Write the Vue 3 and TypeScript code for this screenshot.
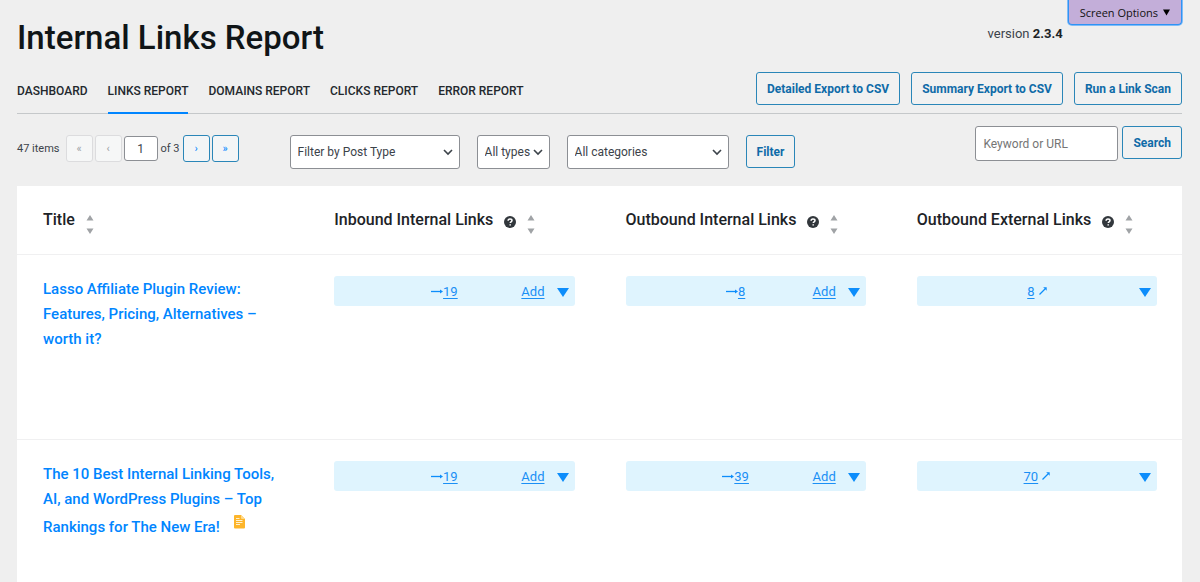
<script setup lang="ts">
import { ref } from 'vue'

interface Column {
  label: string
  help: boolean
}

interface Counter {
  count: number
  kind: 'internal' | 'external'
}

interface Post {
  title: string
  note: boolean
  counters: Counter[]
}

const tabs: string[] = ['Dashboard', 'Links Report', 'Domains Report', 'Clicks Report', 'Error Report']
const activeTab = ref('Links Report')

const actions: string[] = ['Detailed Export to CSV', 'Summary Export to CSV', 'Run a Link Scan']

const filters = [
  { id: 'post-type', name: 'Post type', option: 'Filter by Post Type', size: 'wide' },
  { id: 'link-type', name: 'Link type', option: 'All types', size: 'narrow' },
  { id: 'category', name: 'Category', option: 'All categories', size: 'medium' },
]

const columns: Column[] = [
  { label: 'Title', help: false },
  { label: 'Inbound Internal Links', help: true },
  { label: 'Outbound Internal Links', help: true },
  { label: 'Outbound External Links', help: true },
]

const posts: Post[] = [
  {
    title: 'Lasso Affiliate Plugin Review: Features, Pricing, Alternatives – worth it?',
    note: false,
    counters: [
      { count: 19, kind: 'internal' },
      { count: 8, kind: 'internal' },
      { count: 8, kind: 'external' },
    ],
  },
  {
    title: 'The 10 Best Internal Linking Tools, AI, and WordPress Plugins – Top Rankings for The New Era!',
    note: true,
    counters: [
      { count: 19, kind: 'internal' },
      { count: 39, kind: 'internal' },
      { count: 70, kind: 'external' },
    ],
  },
]

const page = ref('1')
const keyword = ref('')
</script>

<template>
  <main class="report">
    <header class="top">
      <h1>Internal Links Report</h1>
      <div class="top-side">
        <p class="version">version <strong>2.3.4</strong></p>
        <button type="button" class="screen-options">
          Screen Options
          <svg width="7" height="7" viewBox="0 0 8 7" aria-hidden="true"><path d="M0 0h8L4 7z" /></svg>
        </button>
      </div>
    </header>

    <div class="nav-row">
      <nav class="tabs">
        <a
          v-for="tab in tabs"
          :key="tab"
          href="#"
          :class="{ active: tab === activeTab }"
          @click.prevent="activeTab = tab"
        >{{ tab }}</a>
      </nav>
      <div class="actions">
        <button v-for="action in actions" :key="action" type="button" class="btn">{{ action }}</button>
      </div>
    </div>

    <div class="toolbar">
      <div class="pager">
        <span class="total">47 items</span>
        <button type="button" class="page-btn" disabled aria-label="First page">«</button>
        <button type="button" class="page-btn" disabled aria-label="Previous page">‹</button>
        <input v-model="page" type="text" class="page-input" aria-label="Current page" />
        <span class="of">of 3</span>
        <button type="button" class="page-btn" aria-label="Next page">›</button>
        <button type="button" class="page-btn" aria-label="Last page">»</button>
      </div>

      <div class="filters">
        <div v-for="f in filters" :key="f.id" class="select" :class="f.size">
          <select :id="f.id" :aria-label="f.name">
            <option>{{ f.option }}</option>
          </select>
          <svg width="10" height="7" viewBox="0 0 10 7" aria-hidden="true">
            <path d="M1 1l4 4 4-4" />
          </svg>
        </div>
        <button type="button" class="btn">Filter</button>
      </div>

      <form class="search" @submit.prevent>
        <input v-model="keyword" type="text" placeholder="Keyword or URL" aria-label="Keyword or URL" />
        <button type="submit" class="btn">Search</button>
      </form>
    </div>

    <div class="panel">
      <table>
        <thead>
          <tr>
            <th v-for="col in columns" :key="col.label" scope="col">
              <span class="head">
                <span>{{ col.label }}</span>
                <svg v-if="col.help" class="help" width="12" height="12" viewBox="0 0 12 12" aria-hidden="true">
                  <circle cx="6" cy="6" r="6" />
                  <path d="M4.1 4.7C4.1 3.4 5 2.9 6 2.9s2 .6 2 1.6c0 1.300-1.700 1.300-1.700 2.500" />
                  <path d="M6.200 8.200v1.400" />
                </svg>
                <svg class="sort" width="8" height="19" viewBox="0 0 8 19" aria-hidden="true">
                  <path d="M4 0l3.500 5.500h-7zM4 19l3.500-5.500h-7z" />
                </svg>
              </span>
            </th>
          </tr>
        </thead>
        <tbody>
          <tr v-for="post in posts" :key="post.title">
            <td class="title-cell">
              <a href="#">{{ post.title }}</a>
              <svg v-if="post.note" class="note" width="11" height="14" viewBox="0 0 11 14" aria-hidden="true">
                <path class="sheet" d="M1 0h6l4 4v8.500a1 1 0 0 1-1 1H1a1 1 0 0 1-1-1V1a1 1 0 0 1 1-1z" />
                <path class="fold" d="M7 0l4 4H8a1 1 0 0 1-1-1z" />
                <path class="rules" d="M2 3.500h3.500M2 5.500h6.500M2 7.500h6.500M2 9.500h4" />
              </svg>
            </td>
            <td v-for="(c, i) in post.counters" :key="i">
              <div class="pill">
                <span class="count" :class="c.kind">
                  <svg v-if="c.kind === 'internal'" width="12" height="5" viewBox="0 0 12 5" aria-hidden="true">
                    <path class="line" d="M0 2.500h10" />
                    <path d="M9 0.500L12 2.500 9 4.500z" />
                  </svg>
                  <a href="#">{{ c.count }}</a>
                  <svg v-if="c.kind === 'external'" class="out" width="8" height="8" viewBox="0 0 8 8" aria-hidden="true">
                    <path class="line" d="M0.500 7.500L6 2" />
                    <path d="M4.200 0.300h3.500V3.800z" />
                  </svg>
                </span>
                <a v-if="c.kind === 'internal'" href="#" class="add">Add</a>
                <button type="button" class="toggle" aria-label="Show links">
                  <svg width="12" height="9" viewBox="0 0 12 9" aria-hidden="true"><path d="M0 0h12L6 9z" /></svg>
                </button>
              </div>
            </td>
          </tr>
        </tbody>
      </table>
    </div>
  </main>
</template>

<style>
body {
  margin: 0;
  background: #efefef;
}
</style>

<style scoped>
.report {
  box-sizing: border-box;
  min-height: 100vh;
  display: flex;
  flex-direction: column;
  padding: 0 18px 0 17px;
  background: #efefef;
  color: #3c434a;
  font-family: Roboto, "Liberation Sans", sans-serif;
  font-size: 12px;
}

button,
input,
select {
  box-sizing: border-box;
  margin: 0;
  font-family: inherit;
}

.top {
  display: flex;
  justify-content: space-between;
  align-items: flex-start;
  height: 72px;
}

h1 {
  margin: 18px 0 0;
  font-size: 33px;
  line-height: 40px;
  font-weight: 500;
  color: #101517;
}

.top-side {
  display: flex;
  align-items: flex-start;
  gap: 5px;
}

.version {
  margin: 24px 0 0;
  font-size: 13px;
  line-height: 20px;
}

.version strong {
  font-weight: 700;
  color: #1d2327;
}

.screen-options {
  display: flex;
  align-items: center;
  gap: 5px;
  height: 25px;
  padding: 0 11px;
  border: 1px solid #2f93f5;
  border-top: 0;
  border-radius: 0 0 4px 4px;
  background: #c3aed9;
  box-shadow: 0 0 0 1px #7fbcf8;
  color: #111;
  font-family: "Open Sans", "Noto Sans", sans-serif;
  font-size: 11px;
}

.nav-row {
  display: flex;
  justify-content: space-between;
  align-items: stretch;
  border-bottom: 1px solid #c5c8ca;
}

.tabs {
  display: flex;
  gap: 20px;
}

.tabs a {
  box-sizing: border-box;
  height: 42px;
  padding-top: 10px;
  margin-bottom: -1px;
  border-bottom: 2px solid transparent;
  color: #23282d;
  font-size: 12px;
  line-height: 18px;
  font-weight: 500;
  text-transform: uppercase;
  text-decoration: none;
}

.tabs a.active {
  border-bottom-color: #0085ff;
}

.actions {
  display: flex;
  gap: 11px;
}

.btn {
  height: 33px;
  padding: 0 10px;
  border: 1px solid #2a86b8;
  border-radius: 3px;
  background: #f1f1f1;
  color: #0f6ba8;
  font-size: 12px;
  font-weight: 700;
  white-space: nowrap;
}

.toolbar {
  display: flex;
  align-items: flex-start;
  padding-top: 12px;
  height: 60px;
}

.pager {
  display: flex;
  align-items: center;
  gap: 2px;
  height: 27px;
  margin-top: 9px;
}

.total,
.of {
  font-size: 11px;
}

.total {
  margin-right: 4px;
}

.page-btn {
  width: 27px;
  height: 27px;
  padding: 0;
  border: 1px solid #2a86b8;
  border-radius: 3px;
  background: #f3f5f6;
  color: #0085ff;
  font-size: 11px;
}

.page-btn:disabled {
  border-color: #dcdcde;
  background: #f6f7f7;
  color: #999fa5;
}

.page-input {
  width: 34px;
  height: 25px;
  padding: 0;
  border: 1px solid #8c8f94;
  border-radius: 3px;
  background: #fff;
  color: #3c434a;
  font-size: 12px;
  text-align: center;
}

.of {
  margin: 0 1px;
}

.filters {
  display: flex;
  gap: 17px;
  margin: 9px 0 0 51px;
}

.select {
  display: grid;
  align-items: center;
}

.select select {
  grid-area: 1 / 1;
  width: 100%;
  height: 34px;
  padding: 0 7px;
  border: 1px solid #8c8f94;
  border-radius: 3px;
  background: #fff;
  appearance: none;
  color: #3c434a;
  font-size: 12px;
}

.select svg {
  grid-area: 1 / 1;
  justify-self: end;
  margin-right: 7px;
  pointer-events: none;
  fill: none;
  stroke: #3c434a;
  stroke-width: 1.600;
}

.wide {
  width: 170px;
}

.narrow {
  width: 73px;
}

.medium {
  width: 162px;
}

.search {
  display: flex;
  align-items: flex-start;
  gap: 4px;
  margin-left: auto;
}

.search input {
  width: 143px;
  height: 35px;
  padding: 0 7px;
  border: 1px solid #8c8f94;
  border-radius: 3px;
  background: #fff;
  color: #3c434a;
  font-size: 12px;
}

.search input::placeholder {
  color: #757575;
  opacity: 1;
}

.panel {
  flex: 1;
  background: #fff;
}

table {
  width: 100%;
  table-layout: fixed;
  border-collapse: collapse;
}

th {
  height: 68px;
  padding: 0 25px 0 26px;
  border-bottom: 1px solid #f0f0f1;
  text-align: left;
  color: #1d2327;
  font-size: 16px;
  font-weight: 500;
  white-space: nowrap;
}

.head {
  display: flex;
  align-items: center;
  line-height: 20px;
}

.help {
  margin: 3px 0 0 11px;
  fill: #32373c;
}

.help path {
  fill: none;
  stroke: #fff;
  stroke-width: 1.500;
}

.sort {
  margin: 8px 0 0 11px;
  fill: #a0a3a6;
}

td {
  height: 163px;
  padding: 21px 25px 0 26px;
  border-bottom: 1px solid #f0f0f1;
  vertical-align: top;
}

.title-cell {
  height: 162px;
  padding-top: 22px;
  font-size: 15px;
  line-height: 25px;
  font-weight: 500;
}

.title-cell a {
  color: #0085ff;
  text-decoration: none;
}

.note {
  margin: 3px 0 0 14px;
  vertical-align: 3px;
}

.sheet {
  fill: #fdb52a;
}

.fold {
  fill: #ffd98a;
}

.rules {
  fill: none;
  stroke: #fff0cf;
  stroke-width: 1;
}

.pill {
  display: grid;
  grid-template-columns: 1fr auto 1fr;
  align-items: center;
  height: 30px;
  padding: 0 6px;
  border-radius: 3px;
  background: #dff4fe;
  font-size: 13px;
}

.pill a {
  color: #1a8ff5;
  text-underline-offset: 2px;
}

.count {
  grid-area: 1 / 2;
  display: flex;
  align-items: center;
}

.count.internal {
  margin-right: 20px;
}

.pill svg {
  fill: #0d8dfb;
}

.pill .line {
  fill: none;
  stroke: #0d8dfb;
  stroke-width: 1.300;
}

.out {
  margin-left: 4px;
}

.add {
  grid-area: 1 / 3;
  justify-self: end;
  margin-right: 24px;
}

.toggle {
  grid-area: 1 / 3;
  justify-self: end;
  display: flex;
  padding: 3px 0 0;
  border: 0;
  background: none;
}
</style>
